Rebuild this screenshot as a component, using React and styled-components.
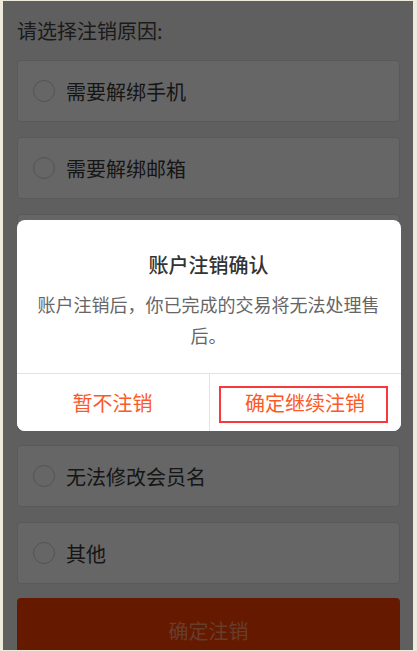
import React, { useState } from 'react';
import styled, { createGlobalStyle } from 'styled-components';

const reasons = [
  '需要解绑手机',
  '需要解绑邮箱',
  '需要解绑第三方账号',
  '安全/隐私顾虑',
  '这是多余的账户',
  '无法修改会员名',
  '其他',
];

const GlobalStyle = createGlobalStyle`
  html, body {
    margin: 0;
    padding: 0;
    background: #efebdc;
  }
  body {
    font-family: "Noto Sans CJK SC", "Noto Sans", sans-serif;
  }
  * {
    box-sizing: border-box;
  }
`;

const App = () => {
  const [selected, setSelected] = useState(null);
  const [showDialog, setShowDialog] = useState(true);

  return (
    <>
      <GlobalStyle />
      <Screen>
        <Page>
          <Titulo>请选择注销原因:</Titulo>
          <Lista>
            {reasons.map((r, i) => (
              <Opcion key={r} onClick={() => setSelected(i)}>
                <Radio checked={selected === i} />
                <span>{r}</span>
              </Opcion>
            ))}
          </Lista>
          <BotonConfirmar>确定注销</BotonConfirmar>
        </Page>

        {showDialog && (
          <Mascara>
            <Dialogo>
              <DialogoCuerpo>
                <DialogoTitulo>账户注销确认</DialogoTitulo>
                <DialogoTexto>账户注销后，你已完成的交易将无法处理售后。</DialogoTexto>
              </DialogoCuerpo>
              <Acciones>
                <Accion onClick={() => setShowDialog(false)}>暂不注销</Accion>
                <Accion marcado>确定继续注销</Accion>
              </Acciones>
            </Dialogo>
          </Mascara>
        )}
      </Screen>
    </>
  );
};

const Screen = styled.div`
  position: relative;
  margin: 1px 4px 0 3px;
  height: 649px;
  overflow: hidden;
  background: #eeeeee;
`;

const Page = styled.div`
  padding: 16px 13px 0 14px;
`;

const Titulo = styled.h2`
  margin: 0 0 15px;
  font-size: 20px;
  line-height: 28px;
  font-weight: normal;
  color: #444444;
`;

const Lista = styled.div`
  display: flex;
  flex-direction: column;
  gap: 15px;
`;

const Opcion = styled.label`
  display: flex;
  align-items: center;
  gap: 11px;
  height: 62px;
  padding: 0 15px;
  background: #ffffff;
  border: 1px solid #dedede;
  border-radius: 4px;
  font-size: 20px;
  color: #383838;
  cursor: pointer;
`;

const Radio = styled.span`
  width: 22px;
  height: 22px;
  flex-shrink: 0;
  border-radius: 50%;
  border: 1px solid #cfcfcf;
  background: ${props => (props.checked ? '#fc4100' : '#fff')};
`;

const BotonConfirmar = styled.button`
  display: block;
  width: 100%;
  height: 64px;
  margin-top: 14px;
  border: none;
  border-radius: 4px;
  background: #fc4100;
  color: #ff9870;
  font-family: inherit;
  font-size: 20px;
`;

const Mascara = styled.div`
  position: absolute;
  inset: 0;
  background: rgba(0, 0, 0, 0.6);
  display: flex;
  align-items: center;
  justify-content: center;
  padding-left: 1px;
`;

const Dialogo = styled.div`
  width: 384px;
  background: #ffffff;
  border-radius: 8px;
  overflow: hidden;
`;

const DialogoCuerpo = styled.div`
  padding: 31px 20px 22px;
  text-align: center;
`;

const DialogoTitulo = styled.h3`
  margin: 0 0 10px;
  font-size: 20px;
  line-height: 28px;
  font-weight: 500;
  color: #333333;
`;

const DialogoTexto = styled.p`
  margin: 0;
  font-size: 18px;
  line-height: 31px;
  color: #666666;
`;

const Acciones = styled.div`
  display: grid;
  grid-template-columns: 1fr 1fr;
  height: 58px;
  border-top: 1px solid #e3e3e3;
`;

const Accion = styled.button`
  position: relative;
  border: none;
  background: #ffffff;
  font-family: inherit;
  font-size: 20px;
  color: #fa5a28;
  cursor: pointer;
  & + & {
    border-left: 1px solid #e3e3e3;
  }
  ${props =>
    props.marcado &&
    `
    &::after {
      content: '';
      position: absolute;
      left: 9px;
      right: 13px;
      top: 12px;
      bottom: 8px;
      border: 2px solid #f53a3a;
    }
  `}
`;

export default App;
